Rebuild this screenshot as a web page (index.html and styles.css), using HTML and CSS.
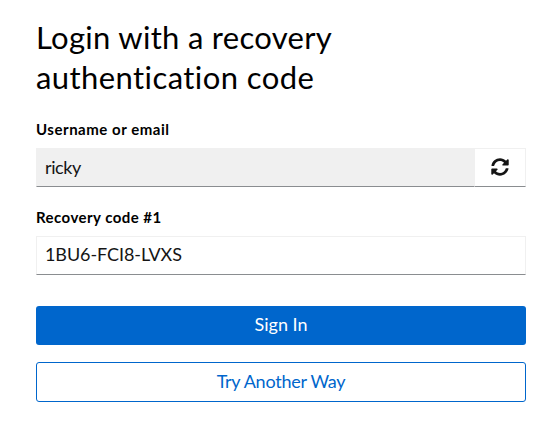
FILE: index.html
```html
<!DOCTYPE html>
<html lang="en">
<head>
<meta charset="utf-8">
<title>Login with a recovery authentication code</title>
<link rel="stylesheet" href="styles.css">
</head>
<body>
<main class="login">
  <h1 class="title"><span class="title-first">Login with a recovery</span><br><span class="title-second">authentication code</span></h1>
  <form class="form">
    <div class="label"><span class="label-user">Username or email</span></div>
    <div class="group">
      <div class="field readonly"><span class="user">ricky</span></div>
      <button class="restart" type="button" aria-label="Restart login">
        <svg viewBox="0 0 512 512" width="18" height="18" fill="currentColor"><path d="M370.72 133.28C339.458 104.008 298.888 87.962 255.848 88c-77.458.068-144.328 53.178-162.791 126.85-1.344 5.363-6.122 9.15-11.651 9.15H24.103c-7.498 0-13.194-6.807-11.807-14.176C33.933 94.924 134.813 8 256 8c66.448 0 126.791 26.136 171.315 68.685L463.03 40.97C478.149 25.851 504 36.559 504 57.941V192c0 13.255-10.745 24-24 24H345.941c-21.382 0-32.09-25.851-16.971-40.971l41.75-41.749zM32 296h134.059c21.382 0 32.09 25.851 16.971 40.971l-41.75 41.75c31.262 29.273 71.835 45.319 114.876 45.28 77.418-.07 144.315-53.144 162.787-126.849 1.344-5.363 6.122-9.15 11.651-9.15h57.304c7.498 0 13.194 6.807 11.807 14.176C478.067 417.076 377.187 504 256 504c-66.448 0-126.791-26.136-171.315-68.685L48.97 471.03C33.851 486.149 8 475.441 8 454.059V320c0-13.255 10.745-24 24-24z"/></svg>
      </button>
    </div>
    <div class="label"><span class="label-code">Recovery code #1</span></div>
    <div class="field"><span class="code">1BU6-FCI8-LVXS</span></div>
    <button class="button primary" type="button"><span class="sign">Sign In</span></button>
    <button class="button secondary" type="button"><span class="another">Try Another Way</span></button>
  </form>
</main>
</body>
</html>
```
FILE: styles.css
```css
* { box-sizing: border-box; }
body {
  margin: 0;
  background: #fff;
  color: #151515;
  font-family: Lato, "Liberation Sans", sans-serif;
}
.login { padding: 17px 32px 0 36px; }
.title {
  margin: 0;
  font-size: 31px;
  font-weight: 400;
  line-height: 40px;
  color: #000;
  white-space: nowrap;
}
.title-first { letter-spacing: 0.3px; }
.title-second { letter-spacing: 0.42px; }
.form { display: flex; flex-direction: column; }
.label {
  height: 27px;
  margin-top: 24px;
  font-size: 15px;
  font-weight: 700;
  line-height: 16px;
  color: #000;
}
.label-user { letter-spacing: 0.53px; }
.label-code { letter-spacing: 0.45px; }
.group { display: flex; }
.group .field { flex: 1; }
.field {
  height: 39px;
  padding: 0 8px;
  border: 1px solid #f0f0f0;
  border-bottom-color: #8a8d90;
  font-size: 18px;
  line-height: 34px;
}
.readonly { background: #f0f0f0; line-height: 36px; }
.user { letter-spacing: -0.4px; }
.code { letter-spacing: -0.08px; }
.restart {
  display: flex;
  align-items: center;
  justify-content: center;
  width: 51px;
  height: 39px;
  padding: 0 0 2px;
  border: 1px solid #f0f0f0;
  border-left: 0;
  border-bottom-color: #8a8d90;
  background: #fff;
  color: #151515;
}
.group + .label { margin-top: 22px; }
.button {
  display: flex;
  align-items: center;
  justify-content: center;
  padding: 0 0 3px;
  border: 0;
  border-radius: 3px;
  font: inherit;
  font-size: 18px;
}
.primary {
  height: 39px;
  margin-top: 31px;
  background: #06c;
  color: #fff;
}
.secondary {
  height: 40px;
  margin-top: 17px;
  border: 1px solid #06c;
  background: #fff;
  color: #06c;
}
.another { letter-spacing: -0.25px; }
```
